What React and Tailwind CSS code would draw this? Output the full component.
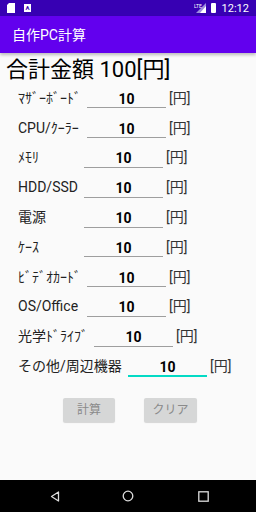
import React from "react";

const rows = [
  { label: "ﾏｻﾞｰﾎﾞｰﾄﾞ", lw: "w-[69px]" },
  { label: "CPU/ｸｰﾗｰ", lw: "w-[69px]" },
  { label: "ﾒﾓﾘ", lw: "w-[66px]" },
  { label: "HDD/SSD", lw: "w-[66px]" },
  { label: "電源", lw: "w-[66px]" },
  { label: "ｹｰｽ", lw: "w-[66px]" },
  { label: "ﾋﾞﾃﾞｵｶｰﾄﾞ", lw: "w-[69px]" },
  { label: "OS/Office", lw: "w-[69px]" },
  { label: "光学ﾄﾞﾗｲﾌﾞ", lw: "w-[76px]" },
  { label: "その他/周辺機器", lw: "w-[110px]", focus: true },
];

const font = { fontFamily: "Roboto, 'Noto Sans CJK JP', sans-serif" };

export default function App() {
  return (
    <div className="w-[256px] h-[512px] flex flex-col bg-[#fafafa] overflow-hidden" style={font}>
      {/* status bar */}
      <div className="h-[16px] bg-[#3700b3] flex items-center px-[7px] text-white">
        <svg width="8" height="10" viewBox="0 0 8 10" className="mr-[9px]">
          <path d="M2 0H8V10H0V2Z" fill="#fff" />
        </svg>
        <div className="w-[7px] h-[8px] bg-white flex items-center justify-center">
          <span className="text-[6px] leading-none font-bold text-[#3700b3]">A</span>
        </div>
        <div className="flex-1" />
        <svg width="12" height="10" viewBox="0 0 12 10" className="mr-[5px]">
          <path d="M12 0V10H2Z" fill="#9e8ddf" />
          <path d="M12 3V10H6Z" fill="#fff" />
          <text x="0" y="5" fontSize="5" fill="#fff" fontFamily="Roboto">LTE</text>
        </svg>
        <div className="w-[5px] h-[10px] bg-white mr-[6px] rounded-[1px]" />
        <span className="text-[11px] leading-none">12:12</span>
      </div>
      {/* action bar */}
      <div className="h-[37px] bg-[#6200ee] flex items-center pl-[12px] shadow-[0_2px_3px_rgba(0,0,0,0.25)] relative z-10">
        <span className="text-white text-[14px] leading-none">自作PC計算</span>
      </div>
      {/* content */}
      <div className="flex-1 flex flex-col">
        <div className="pl-[6px] pt-[4px] h-[32px] text-[22px] leading-[26px] text-black">合計金額 100[円]</div>
        <div className="flex flex-col mt-[-2px]">
          {rows.map((r, i) => (
            <div key={i} className="h-[29.8px] flex items-center pl-[18px] text-[14px] text-[#222]">
              <div className={`${r.lw} shrink-0 leading-none whitespace-nowrap`}>{r.label}</div>
              <div
                className={`w-[79px] h-[20px] flex items-center justify-center font-bold text-[14px] text-black border-b mt-[1px] ${
                  r.focus ? "border-[#03dac5] border-b-[2px]" : "border-[#9e9e9e]"
                }`}
              >
                <span className="mb-[-3px]">10</span>
              </div>
              <div className="ml-[3px] leading-none text-[#333]">[円]</div>
            </div>
          ))}
        </div>
        <div className="flex pl-[63px] gap-[29px] mt-[17px]">
          <div className="w-[52px] h-[24px] bg-[#d6d7d7] rounded-[2px] shadow-[0_1px_1px_rgba(0,0,0,0.15)] flex items-center justify-center text-[12px] text-[#8a8a8a]">
            計算
          </div>
          <div className="w-[53px] h-[24px] bg-[#d6d7d7] rounded-[2px] shadow-[0_1px_1px_rgba(0,0,0,0.15)] flex items-center justify-center text-[12px] text-[#8a8a8a]">
            クリア
          </div>
        </div>
      </div>
      {/* nav bar */}
      <div className="h-[32px] bg-black flex items-center pl-[50px]">
        <svg width="10" height="11" viewBox="0 0 10 11">
          <path d="M8.5 1 L1.5 5.5 L8.5 10 Z" fill="none" stroke="#ddd" strokeWidth="1.3" strokeLinejoin="round" />
        </svg>
        <svg width="12" height="12" viewBox="0 0 12 12" className="ml-[62px]">
          <circle cx="6" cy="6" r="4.8" fill="none" stroke="#ddd" strokeWidth="1.3" />
        </svg>
        <svg width="11" height="11" viewBox="0 0 11 11" className="ml-[64px]">
          <rect x="0.8" y="0.8" width="9.4" height="9.4" fill="none" stroke="#ddd" strokeWidth="1.3" />
        </svg>
      </div>
    </div>
  );
}
